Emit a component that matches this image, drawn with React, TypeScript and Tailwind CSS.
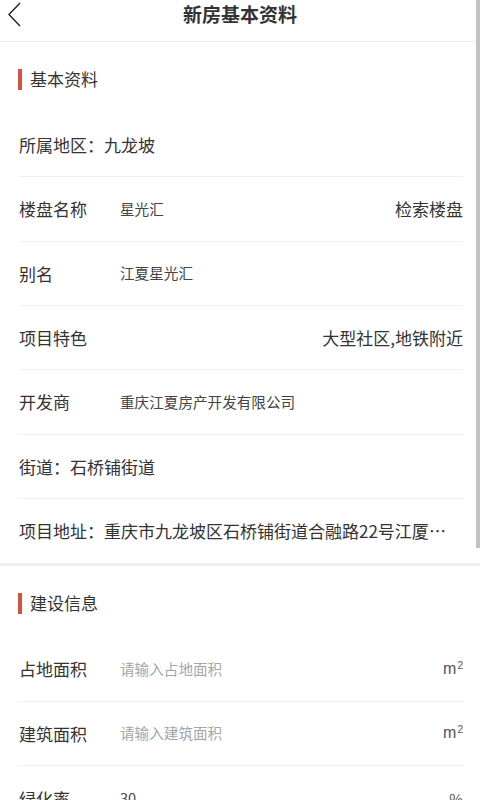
import React from "react";

const font = { fontFamily: '"Noto Sans CJK SC", "Noto Sans", sans-serif' };

function SectionTitle({ text }: { text: string }) {
  return (
    <div className="h-[71px] flex items-start pt-[26px] pl-[18px]">
      <div className="flex items-center h-[22px]">
        <div className="w-[4px] h-[21px] bg-[#d4523f]" />
        <span className="ml-[8px] text-[17px] leading-[22px] text-[#333]">{text}</span>
      </div>
    </div>
  );
}

function Row({
  children,
  last,
  h = "h-[64.33px]",
}: {
  children: React.ReactNode;
  last?: boolean;
  h?: string;
}) {
  return (
    <div className="pl-[19px] pr-[17px]">
      <div
        className={`${h} flex items-center ${last ? "" : "border-b border-[#f0f0f0]"}`}
      >
        {children}
      </div>
    </div>
  );
}

function Label({ children }: { children: React.ReactNode }) {
  return <span className="w-[101px] shrink-0 text-[17px] text-[#333] leading-none">{children}</span>;
}

function Value({ children, gray }: { children: React.ReactNode; gray?: boolean }) {
  return (
    <span className={`text-[14.6px] leading-none ${gray ? "text-[#a5a5a5]" : "text-[#444]"}`}>
      {children}
    </span>
  );
}

function Unit() {
  return (
    <span
      className="ml-auto text-[16px] text-[#555] leading-none"
      style={{ fontFamily: '"Liberation Sans", sans-serif' }}
    >
      m<sup className="text-[10px] ml-[1px]">2</sup>
    </span>
  );
}

export default function App() {
  return (
    <div className="relative w-[480px] h-[800px] overflow-hidden bg-white" style={font}>
      {/* Header */}
      <div className="relative h-[42px] flex items-center justify-center border-b border-[#ececec]">
        <svg className="absolute left-[6px] top-[1px]" width="18" height="26" viewBox="0 0 18 26">
          <path d="M14 2 L3 13.5 L14 25" fill="none" stroke="#222" strokeWidth="1.4" />
        </svg>
        <span className="text-[19px] font-bold text-[#333] -mt-[13px]">新房基本资料</span>
      </div>

      <SectionTitle text="基本资料" />

      <Row>
        <span className="text-[17px] text-[#333] leading-none">所属地区：九龙坡</span>
      </Row>
      <Row>
        <Label>楼盘名称</Label>
        <Value>星光汇</Value>
        <span className="ml-auto text-[17px] text-[#333] leading-none">检索楼盘</span>
      </Row>
      <Row>
        <Label>别名</Label>
        <Value>江夏星光汇</Value>
      </Row>
      <Row>
        <Label>项目特色</Label>
        <span className="ml-auto text-[17px] text-[#333] leading-none">大型社区,地铁附近</span>
      </Row>
      <Row>
        <Label>开发商</Label>
        <Value>重庆江夏房产开发有限公司</Value>
      </Row>
      <Row>
        <span className="text-[17px] text-[#333] leading-none">街道：石桥铺街道</span>
      </Row>
      <Row last>
        <span className="text-[17px] text-[#333] leading-[22px] truncate pr-[14px]">
          项目地址：重庆市九龙坡区石桥铺街道合融路22号江厦星光汇
        </span>
      </Row>

      <div className="h-[3px] bg-[#efefef]" />

      <SectionTitle text="建设信息" />

      <Row>
        <Label>占地面积</Label>
        <Value gray>请输入占地面积</Value>
        <Unit />
      </Row>
      <Row>
        <Label>建筑面积</Label>
        <Value gray>请输入建筑面积</Value>
        <Unit />
      </Row>
      <Row last>
        <Label>绿化率</Label>
        <Value>30</Value>
        <span className="ml-auto text-[15px] text-[#555] leading-none">%</span>
      </Row>

      {/* scrollbar */}
      <div className="absolute right-0 top-0 w-[4px] h-[548px] bg-[#c2c2c2]" />
    </div>
  );
}
